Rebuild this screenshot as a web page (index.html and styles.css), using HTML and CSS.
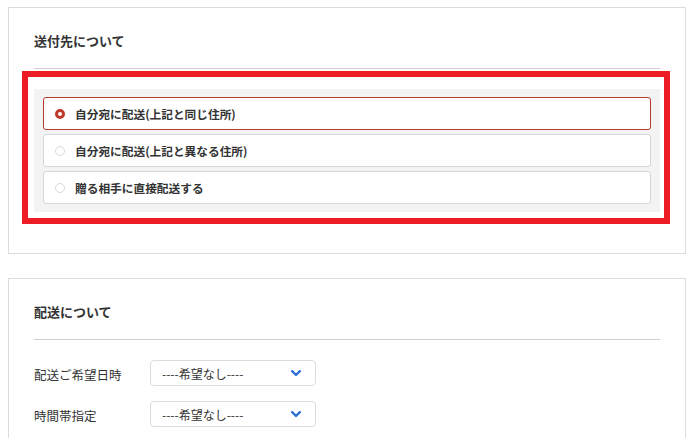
FILE: index.html
```html
<!DOCTYPE html>
<html lang="ja">
<head>
<meta charset="utf-8">
<link rel="stylesheet" href="styles.css">
</head>
<body>
<div class="page">
  <section class="card">
    <h2 class="card-title">送付先について</h2>
    <div class="options">
      <label class="option selected"><span class="radio"></span><span class="option-text">自分宛に配送(上記と同じ住所)</span></label>
      <label class="option"><span class="radio"></span><span class="option-text">自分宛に配送(上記と異なる住所)</span></label>
      <label class="option"><span class="radio"></span><span class="option-text">贈る相手に直接配送する</span></label>
    </div>
  </section>
  <section class="card card-second">
    <h2 class="card-title">配送について</h2>
    <div class="rows">
      <div class="row">
        <span class="row-label">配送ご希望日時</span>
        <div class="select"><span>----希望なし----</span><svg class="chev" width="10" height="7" viewBox="0 0 10 7"><polyline points="1.2,1.2 5,5 8.8,1.2" fill="none" stroke="#2f6fd6" stroke-width="2.4" stroke-linecap="round" stroke-linejoin="round"/></svg></div>
      </div>
      <div class="row">
        <span class="row-label">時間帯指定</span>
        <div class="select"><span>----希望なし----</span><svg class="chev" width="10" height="7" viewBox="0 0 10 7"><polyline points="1.2,1.2 5,5 8.8,1.2" fill="none" stroke="#2f6fd6" stroke-width="2.4" stroke-linecap="round" stroke-linejoin="round"/></svg></div>
      </div>
    </div>
  </section>
</div>
<div class="highlight"></div>
</body>
</html>
```
FILE: styles.css
```css
html, body {
  margin: 0;
  padding: 0;
  background: #fff;
  overflow: hidden;
}
body {
  font-family: "Noto Sans CJK JP", "Noto Sans", sans-serif;
  color: #333;
  width: 700px;
  height: 438px;
  position: relative;
}
.page {
  padding: 7px 0 0 8px;
}
.card {
  width: 678px;
  box-sizing: border-box;
  border: 1px solid #dcdcdc;
  padding: 23px 25px 41px 25px;
}
.card-second {
  margin-top: 24px;
}
.card-title {
  margin: 0;
  font-size: 13px;
  line-height: 20px;
  font-weight: 700;
  color: #333;
  padding-bottom: 17px;
  border-bottom: 1px solid #cfcfcf;
}
.options {
  margin-top: 20px;
  background: #f3f3f3;
  padding: 8px 9px;
  display: flex;
  flex-direction: column;
  gap: 4px;
}
.option {
  height: 33px;
  box-sizing: border-box;
  background: #fff;
  border: 1px solid #d6d6d6;
  border-radius: 3px;
  display: flex;
  align-items: center;
  padding-left: 11px;
}
.option.selected {
  border-color: #b63a2e;
}
.radio {
  width: 10px;
  height: 10px;
  box-sizing: border-box;
  border-radius: 50%;
  border: 1px solid #dadada;
  background: #fff;
  margin-right: 10px;
  flex: none;
}
.option.selected .radio {
  border: 3px solid #c0392b;
}
.option-text {
  font-size: 11.7px;
  font-weight: 700;
  color: #333;
  line-height: 16px;
}
.rows {
  margin-top: 20px;
  display: flex;
  flex-direction: column;
  gap: 15px;
}
.row {
  display: flex;
  align-items: center;
}
.row-label {
  width: 116px;
  flex: none;
  font-size: 12.5px;
  color: #333;
  margin-top: 2px;
}
.select {
  width: 166px;
  height: 26px;
  box-sizing: border-box;
  border: 1px solid #dcdcdc;
  border-radius: 4px;
  display: flex;
  align-items: center;
  justify-content: space-between;
  padding: 0 14px 0 11px;
  font-size: 12px;
  color: #333;
}
.chev {
  display: block;
  margin-top: 1px;
}
.highlight {
  position: absolute;
  left: 22px;
  top: 71px;
  width: 648px;
  height: 153px;
  box-sizing: border-box;
  border: 6px solid #ee1c25;
}
```
